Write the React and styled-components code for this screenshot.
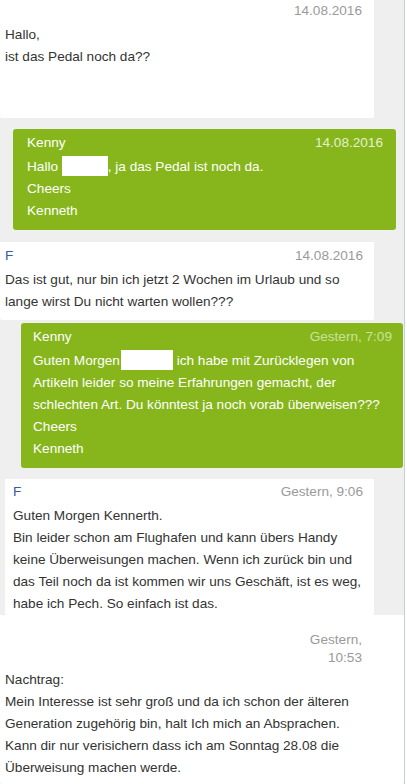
import React from 'react';
import styled, { createGlobalStyle } from 'styled-components';

const GlobalStyle = createGlobalStyle`
  html, body {
    margin: 0;
    padding: 0;
    background: #fff;
  }
  body {
    font-family: 'Liberation Sans', Arial, sans-serif;
    font-size: 13.6px;
    color: #333;
    overflow: hidden;
  }
`;

const Thread = styled.div`
  width: 404px;
  height: 784px;
  overflow: hidden;
  background: #efefef;
  border-right: 1px solid #c6ced8;
  display: flex;
  flex-direction: column;
`;

const Bubble = styled.div`
  margin: ${(p) => p.$gap || 0}px ${(p) => p.$right || 0}px 0 ${(p) => p.$left || 0}px;
  padding: ${(p) => p.$top ?? 3}px ${(p) => p.$padR || 12}px ${(p) => p.$bottom ?? 8}px
    ${(p) => p.$padL || 5}px;
  min-height: ${(p) => p.$minH || 0}px;
  box-sizing: border-box;
  background: ${(p) => (p.$out ? '#86b61c' : '#fff')};
  color: ${(p) => (p.$out ? '#fff' : '#333')};
  border-radius: ${(p) => (p.$out ? '3px' : '0 0 2px 2px')};
  line-height: 22px;
  flex-shrink: 0;
  ${(p) => p.$grow && 'flex: 1;'}
`;

const Head = styled.div`
  display: flex;
  justify-content: space-between;
  align-items: flex-start;
  margin-bottom: 2px;
  min-height: 22px;
`;

const Author = styled.span`
  color: ${(p) => (p.$out ? '#fff' : '#3b5b9e')};
`;

const Stamp = styled.span`
  text-align: right;
  color: ${(p) => p.$tone || '#9a9a9a'};
  line-height: ${(p) => p.$lh || 22}px;
`;

const Body = styled.div`
  white-space: nowrap;
`;

const Redacted = styled.span`
  display: inline-block;
  width: ${(p) => p.$w}px;
  height: 20px;
  background: #fff;
  vertical-align: -5px;
  margin-left: ${(p) => p.$ml || 0}px;
`;

export default function App() {
  return (
    <>
      <GlobalStyle />
      <Thread>
        <Bubble $top={0} $minH={118} $right={30}>
          <Head>
            <span />
            <Stamp>14.08.2016</Stamp>
          </Head>
          <Body>
            Hallo,
            <br />
            ist das Pedal noch da??
          </Body>
        </Bubble>

        <Bubble $out $gap={11} $left={13} $right={8} $padL={14} $padR={13}>
          <Head>
            <Author $out>Kenny</Author>
            <Stamp $tone="rgba(255,255,255,0.8)">14.08.2016</Stamp>
          </Head>
          <Body>
            Hallo <Redacted $w={46} />, ja das Pedal ist noch da.
            <br />
            Cheers
            <br />
            Kenneth
          </Body>
        </Bubble>

        <Bubble $gap={12} $right={30} $bottom={7} $padR={11}>
          <Head>
            <Author>F</Author>
            <Stamp>14.08.2016</Stamp>
          </Head>
          <Body>
            Das ist gut, nur bin ich jetzt 2 Wochen im Urlaub und so
            <br />
            lange wirst Du nicht warten wollen???
          </Body>
        </Bubble>

        <Bubble $out $gap={3} $left={21} $right={1} $padL={12} $padR={11}>
          <Head>
            <Author $out>Kenny</Author>
            <Stamp $tone="#c9e39a">Gestern, 7:09</Stamp>
          </Head>
          <Body>
            Guten Morgen<Redacted $w={52} $ml={1} /> ich habe mit Zurücklegen von
            <br />
            Artikeln leider so meine Erfahrungen gemacht, der
            <br />
            schlechten Art. Du könntest ja noch vorab überweisen???
            <br />
            Cheers
            <br />
            Kenneth
          </Body>
        </Bubble>

        <Bubble $gap={11} $left={5} $right={30} $bottom={0} $padL={8} $padR={11} $top={2}>
          <Head>
            <Author>F</Author>
            <Stamp>Gestern, 9:06</Stamp>
          </Head>
          <Body>
            Guten Morgen Kennerth.
            <br />
            Bin leider schon am Flughafen und kann übers Handy
            <br />
            keine Überweisungen machen. Wenn ich zurück bin und
            <br />
            das Teil noch da ist kommen wir uns Geschäft, ist es weg,
            <br />
            habe ich Pech. So einfach ist das.
          </Body>
        </Bubble>

        <Bubble $grow $top={16} $padR={42}>
          <Head>
            <span />
            <Stamp $lh={18}>
              Gestern,
              <br />
              10:53
            </Stamp>
          </Head>
          <Body>
            Nachtrag:
            <br />
            Mein Interesse ist sehr groß und da ich schon der älteren
            <br />
            Generation zugehörig bin, halt Ich mich an Absprachen.
            <br />
            Kann dir nur verisichern dass ich am Sonntag 28.08 die
            <br />
            Überweisung machen werde.
          </Body>
        </Bubble>
      </Thread>
    </>
  );
}
